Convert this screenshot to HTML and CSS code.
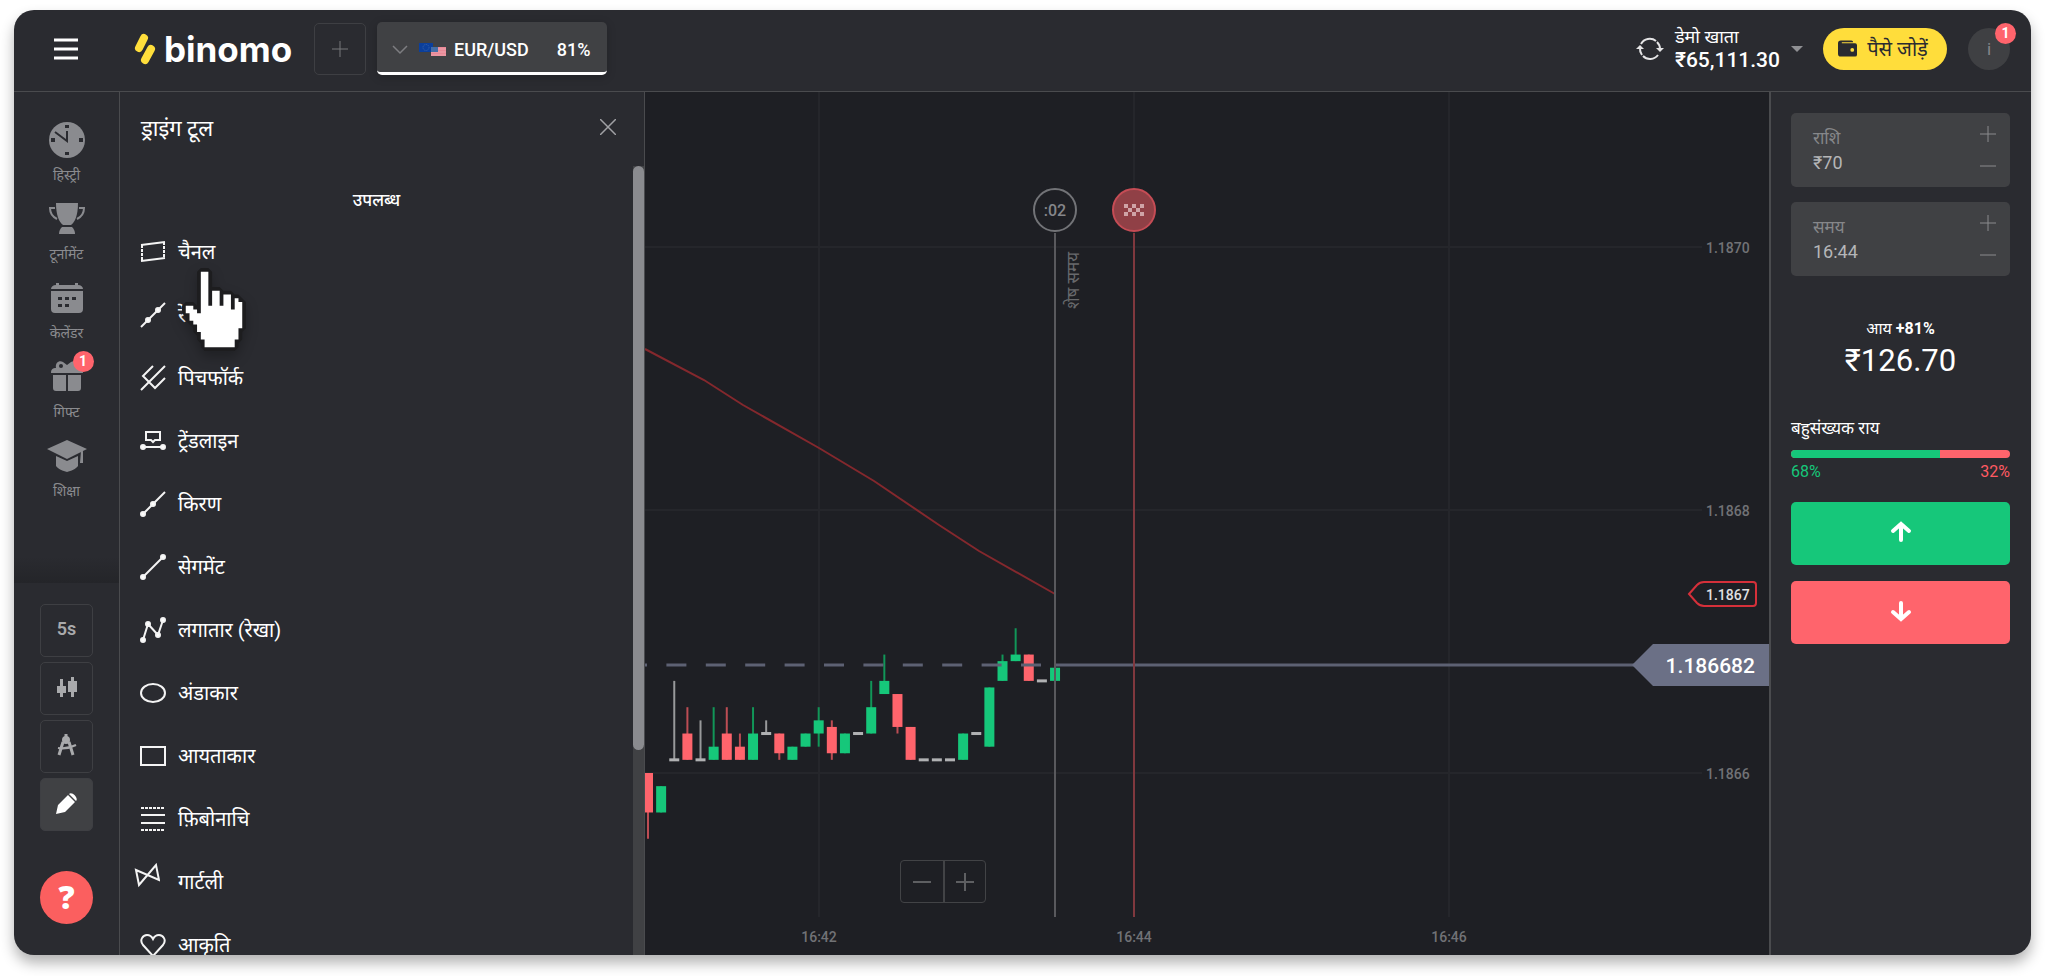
FILE: index.html
```
<!DOCTYPE html>
<html lang="hi">
<head>
    <meta charset="UTF-8">
    <meta name="viewport" content="width=device-width, initial-scale=1.0">
    <title>Binomo</title>
    <link rel="stylesheet" href="styles.css">
</head>
<body>
    <div class="app">
        <!-- Header -->
        <header class="header">
            <button class="menu-btn" aria-label="Menu">
                <svg width="26" height="24" viewBox="0 0 26 24" stroke="#fff" stroke-width="3"><path d="M1 3h24M1 12h24M1 21h24"/></svg>
            </button>
            <a href="#" class="logo">
                <svg width="22" height="32" viewBox="0 0 22 32" stroke="#ffde3b" stroke-width="8" stroke-linecap="round"><path d="M10 5L5 15M17 16L11 27"/></svg>
                <span>binomo</span>
            </a>
            <button class="add-tab" aria-label="Add asset">
                <svg width="18" height="18" viewBox="0 0 18 18" stroke="#77787b"><path d="M9 1v16M1 9h16"/></svg>
            </button>
            <button class="asset-tab">
                <svg class="chevron" width="16" height="10" viewBox="0 0 16 10" fill="none" stroke="#7d7e81" stroke-width="1.5"><path d="M1 1l7 7 7-7"/></svg>
                <svg class="flags" width="27" height="14" viewBox="0 0 27 14">
                    <rect width="14" height="9" fill="#0b3f9c"/>
                    <circle cx="7" cy="4.500" r="3" fill="none" stroke="#3d66a8" stroke-dasharray="1 1"/>
                    <rect x="12" y="4" width="15" height="9" fill="#e98997"/>
                    <path d="M12 6h15M12 9h15M12 12h15" stroke="#eda2ad"/>
                    <rect x="12" y="4" width="7" height="5" fill="#456fa8"/>
                </svg>
                <span class="asset-name">EUR/USD</span>
                <span>81%</span>
            </button>

            <button class="account">
                <svg width="30" height="24" viewBox="0 0 30 24" fill="none" stroke="#e4e4e5" stroke-width="2"><path d="M6 7a10 10 0 0 1 15-3M22 5a10 10 0 0 1 3 7M5 11a10 10 0 0 0 2 7M8 19a10 10 0 0 0 15-1"/><path d="M1 12l4-4 4 4zM21 11h8l-4 4z" fill="#e4e4e5" stroke="none"/></svg>
                <span class="account-info">
                    <span class="account-type">डेमो खाता</span>
                    <span class="account-sum">₹65,111.30</span>
                </span>
                <span class="caret"></span>
            </button>
            <button class="deposit">
                <svg width="19" height="17" viewBox="0 0 20 17"><path d="M3 0h11a2 2 0 0 1 2 2H4v1h14a2 2 0 0 1 2 2v10a2 2 0 0 1-2 2H3a3 3 0 0 1-3-3V3a3 3 0 0 1 3-3z" fill="#2a2b30"/><circle cx="15" cy="10" r="2" fill="#ffdd3b"/></svg>
                पैसे जोड़ें
            </button>
            <button class="avatar">i<span class="badge">1</span></button>
        </header>

        <div class="workspace">
            <!-- Left sidebar -->
            <aside class="sidebar">
                <nav class="nav">
                    <a href="#">
                        <svg width="36" height="36" viewBox="0 0 36 36"><circle cx="18" cy="18" r="18" fill="#8a8b8f"/><path d="M18 9v10L6 10" fill="none" stroke="#2a2b30" stroke-width="2"/><path d="M16 3h4v3h-4zM16 30h4v3h-4zM2 16h4v4H2zM30 16h4v4h-4z" fill="#2a2b30"/></svg>
                        हिस्ट्री
                    </a>
                    <a href="#">
                        <svg width="36" height="36" viewBox="0 0 36 36" fill="#8a8b8f"><path d="M7 2h22c0 12-3 19-7 22h-8C10 21 7 14 7 2z"/><path d="M6 7H1c0 5 3 9 7 11M30 7h5c0 5-3 9-7 11" fill="none" stroke="#8a8b8f" stroke-width="2"/><path d="M13 26h10c2 2 3 4 3 7H10c0-3 1-5 3-7z"/></svg>
                        टूर्नामेंट
                    </a>
                    <a href="#">
                        <svg width="36" height="36" viewBox="0 0 36 36" fill="#8a8b8f"><path d="M7 3h3v2h16V3h3v2c3 0 5 2 5 4H2c0-2 2-4 5-4zM2 11h32v18a4 4 0 0 1-4 4H6a4 4 0 0 1-4-4z"/><path d="M9 17h4v3H9zM16 17h4v3h-4zM23 17h4v3h-4zM9 24h4v3H9zM16 24h4v3h-4z" fill="#2a2b30"/></svg>
                        केलेंडर
                    </a>
                    <a href="#" class="has-badge">
                        <svg width="36" height="36" viewBox="0 0 36 36" fill="#8a8b8f"><path d="M2 14c0-4 2-5 5-5-1-5 3-8 7-6l4 3 4-3c4-2 8 1 7 6 3 0 5 1 5 5zM4 16h13v16H7a3 3 0 0 1-3-3zM19 16h13v13a3 3 0 0 1-3 3H19z"/><circle cx="12" cy="7" r="2" fill="#2a2b30"/></svg>
                        गिफ्ट
                        <span class="badge">1</span>
                    </a>
                    <a href="#">
                        <svg width="40" height="36" viewBox="0 0 40 36" fill="#8a8b8f"><path d="M20 2l20 9-20 10L0 11zM9 18l11 5 11-5v10c-2 3-7 5-11 6-4-1-9-3-11-6zM34 13h2v12h-3z"/></svg>
                        शिक्षा
                    </a>
                </nav>
                <div class="tools">
                    <button>5s</button>
                    <button aria-label="Chart type">
                        <svg width="20" height="22" viewBox="0 0 20 22" fill="#a9aaac"><path d="M0 10h3V3h3v7h3v7H6v4H3v-4H0zM11 5h3V1h3v4h3v11h-3v5h-3v-5h-3z"/></svg>
                    </button>
                    <button aria-label="Indicators">
                        <svg width="20" height="22" viewBox="0 0 20 22" fill="none" stroke="#a9aaac" stroke-width="3"><circle cx="9" cy="6" r="4" fill="#a9aaac" stroke="none"/><path d="M9 0v4M6 8L2 21M12 8l4 13"/><path d="M1 14c6 1 12 0 18-3" stroke-width="2"/></svg>
                    </button>
                    <button class="active" aria-label="Drawing tools">
                        <svg width="22" height="22" viewBox="0 0 22 22" fill="#fff"><path d="M0 22l2-9L12 3l7 7L9 20zM13 2c3-3 10 4 7 7z"/></svg>
                    </button>
                </div>
                <button class="help" aria-label="Help">?</button>
            </aside>

            <!-- Drawing tools list -->
            <section class="panel">
                <div class="panel-head">
                    <h2>ड्राइंग टूल</h2>
                    <button class="close" aria-label="Close">
                        <svg width="16" height="16" viewBox="0 0 16 16" stroke="#a0a1a4" stroke-width="1.5"><path d="M0 0l16 16M16 0L0 16"/></svg>
                    </button>
                </div>
                <div class="panel-body">
                    <h3>उपलब्ध</h3>
                    <ul class="tool-list">
                        <li><button><svg viewBox="0 0 26 26"><path d="M1 6l24-3M1 22l24-3"/><path d="M2 6v16M24 3v16" stroke-dasharray="3 1"/></svg>चैनल</button></li>
                        <li><button><svg viewBox="0 0 26 26"><path d="M1 25L25 1"/><circle cx="8" cy="18" r="2"/><circle cx="18" cy="8" r="2"/></svg>रेखा</button></li>
                        <li><button><svg viewBox="0 0 26 26"><path d="M1 25L25 1M13 1L3 11l12 12 10-10"/></svg>पिचफॉर्क</button></li>
                        <li><button><svg viewBox="0 0 26 26"><path d="M6 4h14v8h-5l-2 2-2-2H6zM2 19h22"/><circle cx="3" cy="19" r="2"/><circle cx="23" cy="19" r="2"/></svg>ट्रेंडलाइन</button></li>
                        <li><button><svg viewBox="0 0 26 26"><path d="M3 23L25 1"/><circle cx="3" cy="23" r="2"/><circle cx="13" cy="13" r="2"/></svg>किरण</button></li>
                        <li><button><svg viewBox="0 0 26 26"><path d="M3 23L23 3"/><circle cx="3" cy="23" r="2"/><circle cx="23" cy="3" r="2"/></svg>सेगमेंट</button></li>
                        <li><button><svg viewBox="0 0 26 26"><path d="M3 23L8 7l10 11 5-15"/><circle cx="3" cy="23" r="2"/><circle cx="8" cy="7" r="2"/><circle cx="18" cy="18" r="2"/><circle cx="23" cy="3" r="2"/></svg>लगातार (रेखा)</button></li>
                        <li><button><svg viewBox="0 0 26 26"><ellipse cx="13" cy="13" rx="12" ry="9"/></svg>अंडाकार</button></li>
                        <li><button><svg viewBox="0 0 26 26"><path d="M1 4h24v18H1z"/></svg>आयताकार</button></li>
                        <li><button><svg viewBox="0 0 26 26"><path d="M1 9h24M1 17h24"/><path d="M1 2h24M1 24h24" stroke-dasharray="3 1"/></svg>फ़िबोनाचि</button></li>
                        <li><button><svg class="gartley" viewBox="0 0 26 26"><path d="M2 7l3 15L22 2l3 15z"/></svg>गार्टली</button></li>
                        <li><button><svg viewBox="0 0 26 26"><path d="M13 24L3 13C-1 8 3 3 7 3c3 0 5 2 6 4 1-2 3-4 6-4 4 0 8 5 4 10z"/></svg>आकृति</button></li>
                    </ul>
                </div>
                <div class="scrollbar"><div class="thumb"></div></div>
                <svg class="cursor" width="64" height="83" viewBox="0 0 17 22">
                    <path d="M5 1h2v9h1V6h2v4h1V7h2v4h1V8h1v1h1v7h-1v3h-1v2H6v-2H5v-2H4v-2H3v-1H2v-2H1v-2h2v1h1v1h1z"/>
                </svg>
            </section>

            <!-- Chart -->
            <main class="chart">
                <svg class="plot" viewBox="0 0 1124 863">
                    <g class="grid">
                        <path d="M0 155H1057M0 418H1057M0 681H1057"/>
                        <path d="M174 0V825M489 0V825M804 0V825"/>
                    </g>
                    <g class="axis">
                        <text x="1061" y="161">1.1870</text>
                        <text x="1061" y="424">1.1868</text>
                        <text x="1061" y="687">1.1866</text>
                        <g text-anchor="middle">
                            <text x="174" y="850">16:42</text>
                            <text x="489" y="850">16:44</text>
                            <text x="804" y="850">16:46</text>
                        </g>
                    </g>
                    <polyline class="average" points="0,257 59,288 98,313 174,356 229,389 294,433 334,459 410,502"/>
                    <g id="candles"></g>
                    <path class="price-dash" d="M-18 573H410"/>
                    <path class="price-line" d="M410 573H990"/>
                    <path class="time-line" d="M410 141V825"/>
                    <circle class="time-mark" cx="410" cy="118" r="21"/>
                    <text class="time-left" x="410" y="124">:02</text>
                    <text class="time-label" transform="translate(434 217) rotate(-90)">शेष समय</text>
                    <path class="expiry-line" d="M489 141V825"/>
                    <circle class="expiry-mark" cx="489" cy="118" r="21"/>
                    <path class="flag" d="M479 112h4v4h-4zM487 112h4v4h-4zM495 112h4v4h-4zM483 116h4v4h-4zM491 116h4v4h-4zM479 120h4v4h-4zM487 120h4v4h-4zM495 120h4v4h-4z"/>
                    <path class="tag" d="M1044 502l8-9q3-3 7-3h49q3 0 3 3v18q0 3-3 3h-49q-4 0-7-3z"/>
                    <text class="tag-text" x="1061" y="508">1.1867</text>
                    <path class="price-tag" d="M987 573l21-21h116v42h-116z"/>
                    <text class="price-text" x="1110" y="581">1.186682</text>
                </svg>
                <div class="zoom">
                    <button aria-label="Zoom out"><svg width="18" height="18" viewBox="0 0 18 18"><path d="M0 9h18"/></svg></button>
                    <button aria-label="Zoom in"><svg width="18" height="18" viewBox="0 0 18 18"><path d="M0 9h18M9 0v18"/></svg></button>
                </div>
            </main>

            <!-- Trade panel -->
            <aside class="trade">
                <div class="field">
                    <div class="field-main">
                        <label for="amount">राशि</label>
                        <input type="text" id="amount" value="₹70">
                    </div>
                    <div class="stepper">
                        <button aria-label="Increase amount"><svg width="18" height="18" viewBox="0 0 18 18"><path d="M1 9h16M9 1v16"/></svg></button>
                        <button aria-label="Decrease amount"><svg width="18" height="18" viewBox="0 0 18 18"><path d="M1 9h16"/></svg></button>
                    </div>
                </div>
                <div class="field">
                    <div class="field-main">
                        <label for="time">समय</label>
                        <input type="text" id="time" value="16:44">
                    </div>
                    <div class="stepper">
                        <button aria-label="Increase time"><svg width="18" height="18" viewBox="0 0 18 18"><path d="M1 9h16M9 1v16"/></svg></button>
                        <button aria-label="Decrease time"><svg width="18" height="18" viewBox="0 0 18 18"><path d="M1 9h16"/></svg></button>
                    </div>
                </div>
                <div class="income">
                    <p>आय <b>+81%</b></p>
                    <p class="income-sum">₹126.70</p>
                </div>
                <p class="majority-title">बहुसंख्यक राय</p>
                <div class="majority-bar"><div class="majority-up" style="width: 68%"></div></div>
                <div class="majority-values"><span class="up-text">68%</span><span class="down-text">32%</span></div>
                <button class="deal up" aria-label="Up">
                    <svg width="22" height="22" viewBox="0 0 22 22"><path d="M11 19V3M3 10l8-7 8 7"/></svg>
                </button>
                <button class="deal down" aria-label="Down">
                    <svg width="22" height="22" viewBox="0 0 22 22"><path d="M11 3v16M3 12l8 7 8-7"/></svg>
                </button>
            </aside>
        </div>
    </div>

    <script>
        // [open, close, high, low] in price steps above 1.1866
        const candles = [
            [0, -6, 0, -10], [-6, -2, -2, -6], [2, 2, 14, 2], [6, 2, 10, 2],
            [2, 2, 8, 2], [2, 4, 10, 2], [6, 2, 10, 2], [4, 2, 6, 2],
            [2, 6, 10, 2], [6, 6, 8, 6], [6, 3, 6, 2], [2, 4, 4, 2],
            [4, 6, 6, 4], [6, 8, 10, 4], [7, 3, 8, 2], [3, 6, 6, 3],
            [6, 6, 6, 6], [6, 10, 14, 6], [12, 14, 18, 12], [12, 7, 12, 6],
            [7, 2, 7, 2], [2, 2, 2, 2], [2, 2, 2, 2], [2, 2, 2, 2],
            [2, 6, 6, 2], [6, 6, 6, 6], [4, 13, 13, 4], [14, 17, 18, 14],
            [17, 18, 22, 17], [18, 14, 18, 14], [14, 14, 14, 14], [14, 16, 18, 14]
        ];
        const baseY = 681;
        const step = 6.58;
        const pitch = 13.13;

        const toY = level => baseY - level * step;

        document.getElementById('candles').innerHTML = candles.map(([open, close, high, low], i) => {
            const x = 3 + i * pitch;
            const type = close > open ? 'rise' : close < open ? 'fall' : 'flat';
            const top = type === 'flat' ? toY(open) - 1.5 : toY(Math.max(open, close));
            const height = type === 'flat' ? 3 : Math.abs(close - open) * step;
            return `
                <g class="${type}">
                    <path d="M${x} ${toY(high)}V${toY(low)}"/>
                    <rect x="${x - 5}" y="${top}" width="10" height="${height}"/>
                </g>
            `;
        }).join('');
    </script>
</body>
</html>
```
FILE: styles.css
```
* {
    margin: 0;
    padding: 0;
    box-sizing: border-box;
}

body {
    height: 100vh;
    padding: 10px 17px 21px 14px;
    background-color: #fff;
    color: #fff;
    font-family: Roboto, "Noto Sans", "Noto Sans Devanagari", sans-serif;
    font-size: 16px;
}

button, input {
    font: inherit;
    color: inherit;
    background: none;
    border: none;
}

button {
    display: flex;
    align-items: center;
    justify-content: center;
    cursor: pointer;
}

a {
    color: inherit;
    text-decoration: none;
}

ul {
    list-style: none;
}

.app {
    height: 100%;
    display: flex;
    flex-direction: column;
    background-color: #2a2b30;
    border-radius: 20px;
    overflow: hidden;
    box-shadow: 0 8px 14px rgba(0, 0, 0, 0.3);
}

/* Header */
.header {
    height: 82px;
    flex-shrink: 0;
    display: flex;
    align-items: center;
    padding: 0 21px 4px 39px;
    border-bottom: 1px solid #4a4b4e;
}

.menu-btn {
    margin-right: 55px;
}

.logo {
    display: flex;
    align-items: center;
    gap: 8px;
    width: 180px;
    font-family: Inter, sans-serif;
    font-size: 35px;
    font-weight: 700;
    line-height: 40px;
}

.add-tab {
    width: 52px;
    height: 52px;
    margin-right: 11px;
    border: 1px solid #3e3f43;
    border-radius: 5px;
}

.asset-tab {
    height: 53px;
    padding: 5px 17px 0 15px;
    background-color: #404144;
    border-bottom: 3px solid #fff;
    border-radius: 5px;
    font-size: 18px;
    font-weight: 500;
    box-shadow: 0 2px 10px rgba(0, 0, 0, 0.2);
}

.chevron {
    margin-right: 11px;
}

.flags {
    margin-right: 8px;
}

.asset-name {
    margin-right: 28px;
}

.account {
    margin-left: auto;
    gap: 10px;
}

.account-info {
    display: flex;
    flex-direction: column;
    text-align: left;
}

.account-type {
    font-size: 18px;
    line-height: 22px;
}

.account-sum {
    font-size: 21px;
    font-weight: 500;
    line-height: 24px;
}

.caret {
    margin: 0 20px 0 1px;
    border: 6px solid transparent;
    border-top-color: #8f9093;
    border-bottom: none;
}

.deposit {
    width: 124px;
    height: 42px;
    gap: 10px;
    margin-right: 21px;
    padding-right: 4px;
    background-color: #ffdd3b;
    border-radius: 21px;
    color: #2a2b30;
    font-size: 20px;
    white-space: nowrap;
}

.deposit svg {
    flex-shrink: 0;
}

.avatar {
    position: relative;
    width: 42px;
    height: 42px;
    background-color: #3f4043;
    border-radius: 50%;
    color: #85868a;
    font-size: 17px;
}

.badge {
    position: absolute;
    top: -5px;
    right: -6px;
    width: 21px;
    height: 21px;
    background-color: #ff646c;
    border-radius: 50%;
    color: #fff;
    font-size: 14px;
    font-weight: 700;
    line-height: 21px;
    text-align: center;
}

.workspace {
    flex: 1;
    min-height: 0;
    display: flex;
}

/* Left sidebar */
.sidebar {
    width: 106px;
    flex-shrink: 0;
    display: flex;
    flex-direction: column;
    align-items: center;
    border-right: 1px solid #4a4b4e;
}

.nav {
    width: 100%;
    height: 491px;
    display: flex;
    flex-direction: column;
    align-items: center;
    gap: 14px;
    padding-top: 30px;
    background: linear-gradient(transparent 465px, #242529);
    color: #8a8b8f;
    font-size: 14px;
    line-height: 24px;
}

.nav a {
    display: flex;
    flex-direction: column;
    align-items: center;
    gap: 5px;
    height: 65px;
}

.has-badge {
    position: relative;
}

.nav .badge {
    top: -8px;
    right: -9px;
}

.tools {
    display: flex;
    flex-direction: column;
    gap: 5px;
    padding-top: 21px;
}

.tools button {
    width: 53px;
    height: 53px;
    padding-bottom: 4px;
    border: 1px solid #3e3f43;
    border-radius: 5px;
    color: #a9aaac;
    font-size: 18px;
    font-weight: 600;
}

.tools .active {
    background-color: #404144;
}

.help {
    width: 53px;
    height: 53px;
    margin-top: 40px;
    padding-bottom: 2px;
    background-color: #fb5f5f;
    border-radius: 50%;
    font-family: "Open Sans", sans-serif;
    font-size: 32px;
    font-weight: 800;
}

/* Drawing tools list */
.panel {
    position: relative;
    width: 525px;
    flex-shrink: 0;
    border-right: 1px solid #4a4b4e;
}

.panel-head {
    height: 74px;
    display: flex;
    align-items: center;
    justify-content: space-between;
    padding: 0 28px 4px 21px;
}

.panel-head h2 {
    font-size: 22px;
    font-weight: 400;
}

.panel-body {
    height: calc(100% - 74px);
    overflow: hidden;
}

.panel-body h3 {
    padding: 21px 11px 0 0;
    font-size: 17px;
    font-weight: 500;
    line-height: 26px;
    text-align: center;
}

.tool-list {
    padding-top: 7px;
}

.tool-list button {
    width: 100%;
    height: 63px;
    justify-content: flex-start;
    gap: 12px;
    padding-left: 20px;
    font-size: 20px;
}

.tool-list svg {
    width: 26px;
    height: 26px;
    fill: none;
    stroke: #f4f4f4;
    stroke-width: 2;
}

.tool-list circle {
    fill: #fff;
}

.tool-list .gartley {
    margin: -12px 6px 0 -6px;
}

.scrollbar {
    position: absolute;
    top: 74px;
    right: 0;
    bottom: 0;
    width: 11px;
    background-color: #404144;
}

.thumb {
    height: 74%;
    background-color: #8a8b8f;
    border-radius: 6px;
}

.cursor {
    position: absolute;
    top: 176px;
    left: 62px;
    overflow: visible;
    fill: #fff;
    stroke: #1d1d1f;
    stroke-width: 2;
    stroke-linejoin: bevel;
    paint-order: stroke;
    filter: drop-shadow(0 6px 6px rgba(0, 0, 0, 0.25));
}

/* Chart */
.chart {
    position: relative;
    flex: 1;
    min-width: 0;
    background-color: #1e1f24;
}

.plot {
    display: block;
    width: 100%;
    height: 100%;
}

.plot path, .plot polyline {
    fill: none;
}

.grid path {
    stroke: #25262b;
    stroke-width: 2;
}

.axis {
    fill: #717276;
    font-size: 14px;
    font-weight: 500;
}

.average {
    stroke: #84282d;
    stroke-width: 2;
}

.rise path {
    stroke: #119658;
    stroke-width: 2;
}

.rise rect {
    fill: #16c77a;
}

.fall path {
    stroke: #bd4d54;
    stroke-width: 2;
}

.fall rect {
    fill: #ff646c;
}

.flat path {
    stroke: #98999b;
    stroke-width: 2;
}

.flat rect {
    fill: #b0b1b3;
}

.plot .price-dash {
    stroke: #5d6173;
    stroke-width: 3;
    stroke-dasharray: 20 19.4;
}

.price-line {
    stroke: #5d6173;
    stroke-width: 3;
}

.time-line {
    stroke: #59595d;
    stroke-width: 2;
}

.time-mark {
    fill: #1e1f24;
    stroke: #727377;
    stroke-width: 2;
}

.time-left {
    fill: #85868a;
    font-size: 16px;
    font-weight: 500;
    text-anchor: middle;
}

.time-label {
    fill: #68696c;
    font-size: 17px;
}

.expiry-line {
    stroke: #80383e;
    stroke-width: 2;
}

.expiry-mark {
    fill: #904046;
    stroke: #c54c55;
    stroke-width: 2;
}

.plot .flag {
    fill: #cfa4a7;
}

.plot .tag {
    fill: #1e1f24;
    stroke: #d5303a;
    stroke-width: 2;
}

.tag-text {
    fill: #e0e0e1;
    font-size: 14px;
    font-weight: 500;
}

.plot .price-tag {
    fill: #6b7086;
}

.price-text {
    fill: #fff;
    font-size: 21px;
    font-weight: 500;
    text-anchor: end;
}

.zoom {
    position: absolute;
    bottom: 52px;
    left: 255px;
    display: flex;
    border: 1px solid #424346;
    border-radius: 4px;
}

.zoom button {
    width: 42px;
    height: 41px;
}

.zoom button + button {
    border-left: 2px solid #424346;
}

.zoom path {
    stroke: #5e5f62;
    stroke-width: 2;
}

/* Trade panel */
.trade {
    width: 262px;
    flex-shrink: 0;
    padding: 21px 21px 0 20px;
    border-left: 2px solid #4a4b4e;
}

.field {
    height: 74px;
    display: flex;
    justify-content: space-between;
    margin-bottom: 15px;
    padding: 12px 13px 12px 22px;
    background-color: #404144;
    border-radius: 5px;
    color: #b5b6b8;
}

.field label {
    display: block;
    color: #86878a;
    font-size: 17px;
    line-height: 26px;
}

.field input {
    display: block;
    width: 110px;
    font-size: 18px;
    line-height: 24px;
}

.stepper {
    display: flex;
    flex-direction: column;
    justify-content: space-between;
}

.stepper path {
    stroke: #8a8b8d;
}

.income {
    margin-top: 41px;
    text-align: center;
    font-size: 16px;
    line-height: 24px;
}

.income-sum {
    font-size: 31px;
    line-height: 40px;
}

.majority-title {
    margin-top: 35px;
    font-size: 17px;
    line-height: 24px;
}

.majority-bar {
    height: 8px;
    margin-top: 10px;
    background-color: #ff646c;
    border-radius: 4px;
    overflow: hidden;
}

.majority-up {
    height: 100%;
    background-color: #16c77a;
}

.majority-values {
    display: flex;
    justify-content: space-between;
    margin: 4px 0 20px;
    font-size: 16px;
    line-height: 20px;
}

.up-text {
    color: #16c77a;
}

.down-text {
    color: #ff5a62;
}

.deal {
    width: 100%;
    height: 63px;
    margin-bottom: 16px;
    padding-bottom: 4px;
    border-radius: 5px;
}

.deal.up {
    background-color: #16c77a;
}

.deal.down {
    background-color: #ff646c;
}

.deal path {
    fill: none;
    stroke: #fff;
    stroke-width: 4;
    stroke-linecap: round;
}
```
